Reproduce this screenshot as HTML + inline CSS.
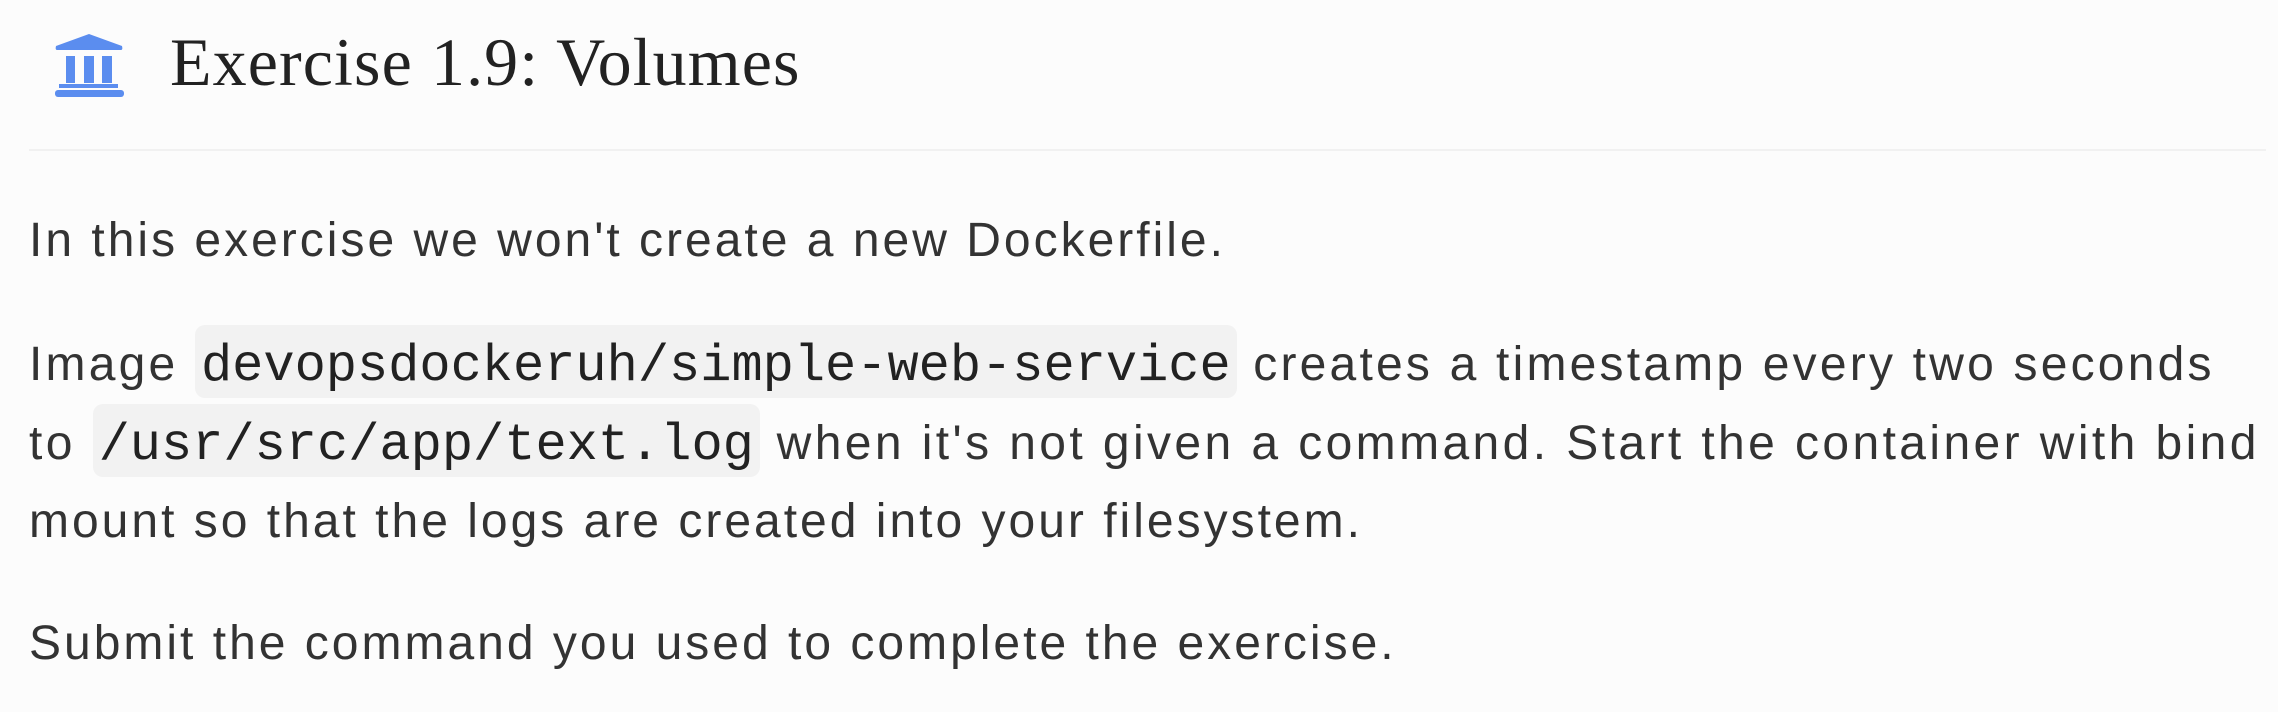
<!DOCTYPE html>
<html><head><meta charset="utf-8"><style>
html,body{margin:0;padding:0;background:#fcfcfc;width:2278px;height:712px;overflow:hidden;position:relative}
.t{position:absolute;white-space:nowrap;color:#333;font-family:"Liberation Sans",sans-serif;font-size:48px;letter-spacing:3px;line-height:1}
code{font-family:"Liberation Mono",monospace;font-size:52px;letter-spacing:0;color:#222;background:#f2f2f2;border-radius:10px;padding:12px 6px 2px 6px}
</style></head><body>
<svg style="position:absolute;left:55px;top:34px" width="70" height="64" viewBox="0 0 70 64">
<path d="M34 0 L67 12 Q68 16 66 16 L2 16 Q0 16 1 12 Z" fill="#5b8def"/>
<rect x="11" y="22" width="9" height="27" fill="#5b8def"/>
<rect x="29" y="22" width="10" height="27" fill="#5b8def"/>
<rect x="47" y="22" width="10" height="27" fill="#5b8def"/>
<rect x="4" y="50" width="59" height="4" fill="#5b8def"/>
<rect x="0" y="56" width="69" height="7" rx="3" fill="#5b8def"/>
</svg>
<div class="t" style="left:170px;top:28px;font-family:'Liberation Serif',serif;font-size:68px;letter-spacing:1.1px;color:#222">Exercise 1.9: Volumes</div>
<div style="position:absolute;left:29px;top:149px;width:2237px;height:2px;background:#f1f1f1"></div>
<div class="t" style="left:29px;top:217px">In this exercise we won't create a new Dockerfile.</div>
<div class="t" style="left:29px;top:341px;letter-spacing:3.2px">Image <code>devopsdockeruh/simple-web-service</code> creates a timestamp every two seconds</div>
<div class="t" style="left:29px;top:420px;letter-spacing:3.4px">to <code>/usr/src/app/text.log</code> when it's not given a command. Start the container with bind</div>
<div class="t" style="left:29px;top:498px">mount so that the logs are created into your filesystem.</div>
<div class="t" style="left:29px;top:620px">Submit the command you used to complete the exercise.</div>
</body></html>
